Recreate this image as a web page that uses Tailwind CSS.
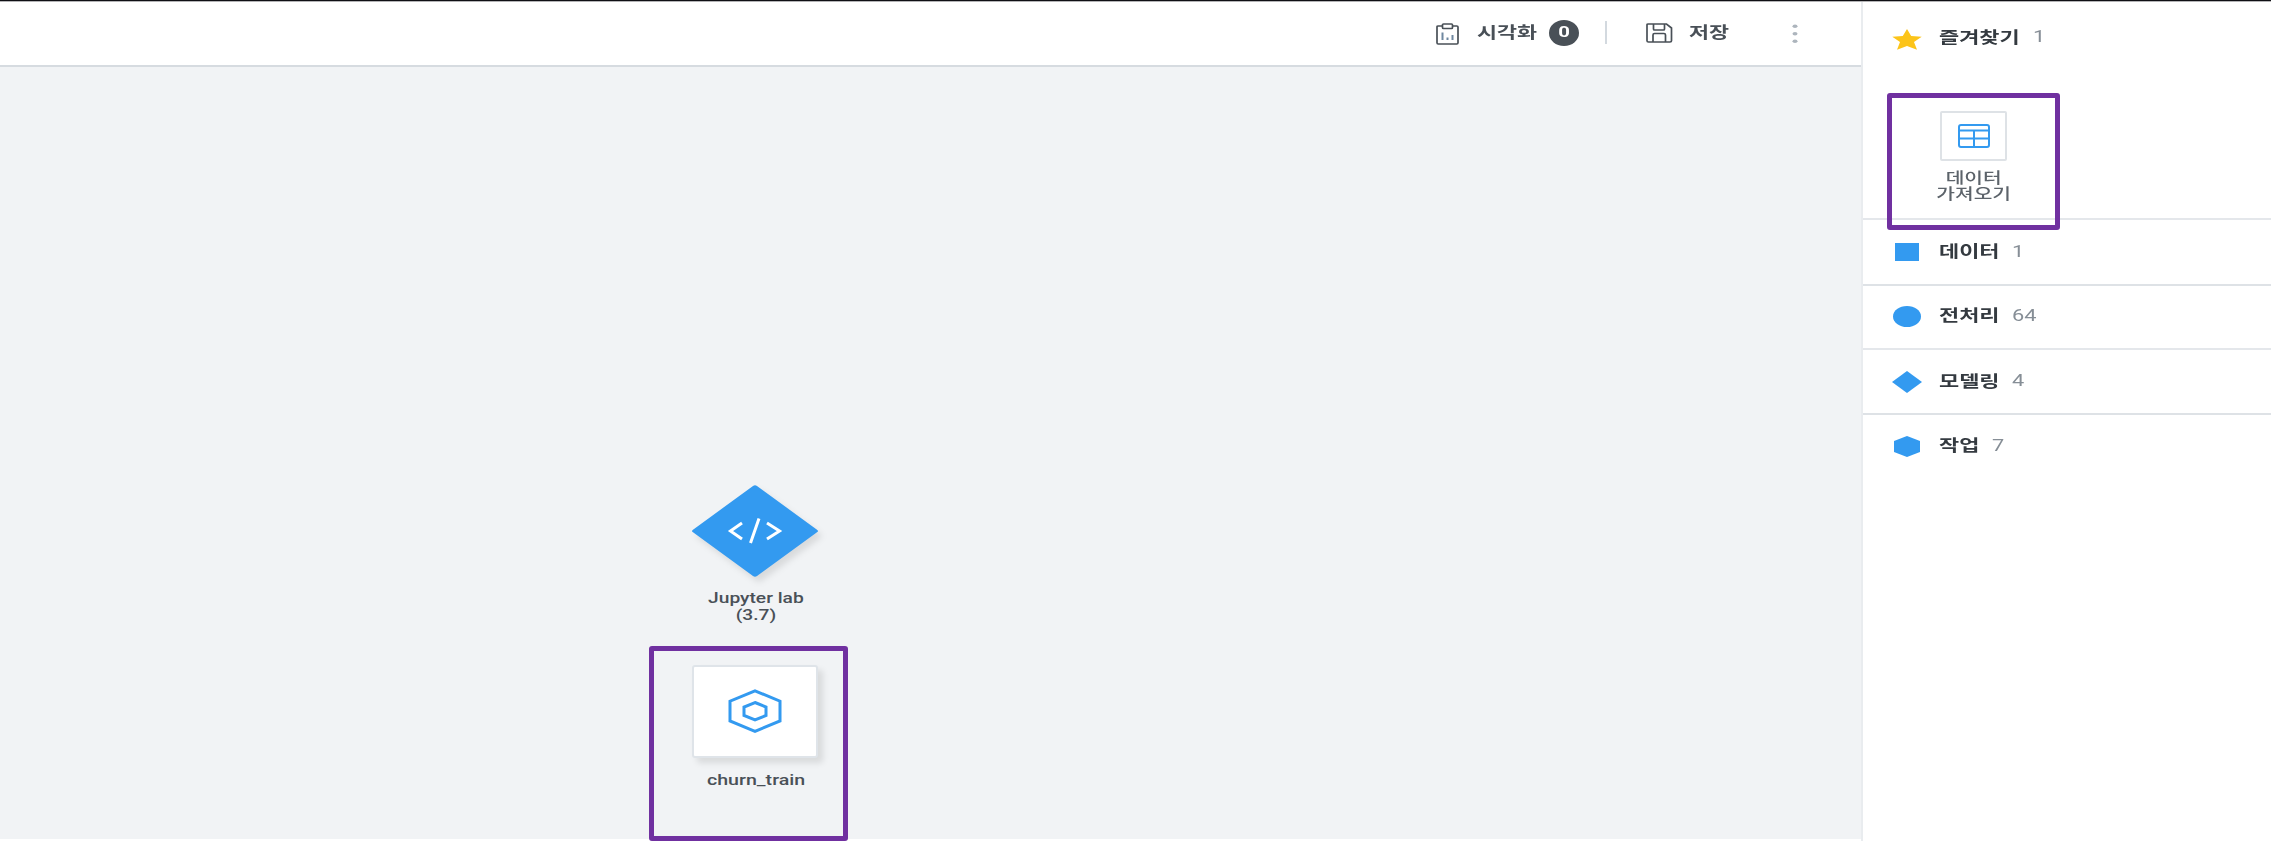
<!DOCTYPE html>
<html lang="ko">
<head>
<meta charset="utf-8">
<title>Workflow editor</title>
<script src="https://cdn.jsdelivr.net/npm/@tailwindcss/browser@4"></script>
</head>
<body class="w-[2271px] h-[841px] overflow-hidden bg-white font-['Roboto','Noto_Sans_CJK_KR',sans-serif] text-[#343a40]">
<div class="flex h-[841px] flex-col border-t border-[#101014]">
  <div class="h-px shrink-0 bg-[#b4b4b6]"></div>
  <div class="flex h-[839px]">
    <main class="flex w-[1861px] shrink-0 flex-col">
      <header class="flex h-[65px] shrink-0 items-center border-b-2 border-[#d6dbe0] pl-[1436px] pb-[2px] text-[#495057]">
        <svg class="mt-[2px] h-[22px] w-[23px] shrink-0" viewBox="0 0 23 22" fill="none" stroke="#495057" stroke-width="1.700"><path d="M6.500 3H2.200Q1 3 1 4V19.700Q1 21 2.200 21H20.800Q22 21 22 19.700V4Q22 3 20.800 3H16.500"/><rect x="6.500" y="1" width="10" height="4.500" rx="1"/><path d="M6.500 9.500V17M11.500 14.500V17M16.500 12V17" stroke="#6f87a0" stroke-width="2"/></svg>
        <div class="ml-[18px] w-[60px] shrink-0"><span class="inline-block origin-left scale-x-[1.36] text-[16px] leading-6 font-bold whitespace-nowrap">시각화</span></div>
        <div class="ml-3 flex h-[26px] w-[30px] shrink-0 items-center justify-center rounded-[50%/50%] bg-[#495057] text-white"><span class="-mt-[2px] inline-block scale-x-[1.45] text-[14px] leading-5 font-bold">0</span></div>
        <div class="ml-[26px] h-[23px] w-[2px] shrink-0 bg-[#d3d9df]"></div>
        <svg class="mt-[1px] ml-[39px] h-5 w-[27px] shrink-0" viewBox="0 0 27 20" fill="none" stroke="#495057" stroke-width="1.700"><path d="M2.200 1H20.500L25.500 5V17.800Q25.500 19 24 19H2.500Q1 19 1 17.800V2Q1 1 2.200 1ZM7.500 1V6Q7.500 7 8.500 7H17.500Q18.500 7 18.500 6V1M7 19V12Q7 10.500 8.500 10.500H18Q19.500 10.500 19.500 12V19"/></svg>
        <div class="ml-4 w-[40px] shrink-0"><span class="inline-block origin-left scale-x-[1.36] text-[16px] leading-6 font-bold whitespace-nowrap">저장</span></div>
        <svg class="mt-[2px] ml-[63px] h-[20px] w-[6px] shrink-0" viewBox="0 0 6 20" fill="#adb5bd"><ellipse cx="3" cy="2.200" rx="2.500" ry="1.800"/><ellipse cx="3" cy="9.800" rx="2.500" ry="1.800"/><ellipse cx="3" cy="17.300" rx="2.500" ry="1.800"/></svg>
      </header>
      <section class="relative h-[772px] shrink-0 bg-[#f1f3f5]">
        <div class="absolute left-[675px] top-[412px] flex w-[160px] flex-col items-center">
          <svg class="h-[104px] w-[144px] overflow-visible drop-shadow-[4px_5px_3px_rgba(0,0,0,0.1)]" viewBox="-9 -6 144 104"><path d="M61 1Q63 -.500 65 1L125 44.700Q127 46 125 47.300L65 91Q63 92.500 61 91L1 47.300Q-1 46 1 44.700Z" fill="#339af0"/><path d="M50 38L38.500 46L50 54M75 38L87.500 46L75 54M67 33.500L58.500 58" fill="none" stroke="#fff" stroke-width="3"/></svg>
          <span class="mt-[7px] inline-block translate-x-px scale-x-[1.37] text-[14px] leading-[17px] font-medium whitespace-nowrap text-center text-[#495057]">Jupyter lab<br>(3.7)</span>
        </div>
        <div class="absolute left-[675px] top-[598px] flex w-[160px] flex-col items-center">
          <div class="flex h-[93px] w-[126px] items-center justify-center rounded-[3px] border-2 border-[#dfe4e9] bg-white pb-px shadow-[5px_5px_6px_rgba(0,0,0,0.1)]">
            <svg class="h-[44px] w-[54px]" viewBox="0 0 54 44" fill="none" stroke="#339af0"><path d="M27 1.800L52 12.200V32L27 42.300L2 32V12.200Z" stroke-width="3"/><path d="M27 13.500L38 18V26.500L27 31L16 26.500V18Z" stroke-width="3"/></svg>
          </div>
          <span class="mt-[14px] inline-block translate-x-px scale-x-[1.4] text-[14px] leading-[17px] font-medium whitespace-nowrap text-[#495057]">churn_train</span>
        </div>
        <div class="absolute left-[649px] top-[579px] h-[195px] w-[199px] rounded-[3px] border-5 border-[#7030a0]"></div>
      </section>
    </main>
    <aside class="relative flex w-[410px] shrink-0 flex-col border-l-2 border-[#e9ecef] bg-white">
      <section class="h-[218px] shrink-0 border-b-2 border-[#e4e7eb]">
        <div class="flex h-[72px] items-center pl-[29px]">
          <svg class="mt-[2px] h-[21px] w-[30px]" viewBox="0 0 30 21"><path d="M15 0L19.200 7L29.700 7.800L22 13L25 20.700L15 16.900L5 20.700L8 13L.300 7.800L10.800 7Z" fill="#fcc419"/></svg>
          <div class="ml-[17px] w-[94px]"><span class="inline-block origin-left scale-x-[1.37] text-[16px] leading-6 font-bold whitespace-nowrap">즐겨찾기</span></div>
          <span class="-mt-[2px] inline-block origin-left scale-x-[1.36] text-[16px] leading-6 text-[#868e96]">1</span>
        </div>
        <div class="ml-[24px] mt-[37px] flex w-[173px] flex-col items-center">
          <div class="flex h-[50px] w-[67px] items-center justify-center rounded-[2px] border-2 border-[#dee2e6]">
            <svg class="h-6 w-8" viewBox="0 0 32 24" fill="none" stroke="#339af0" stroke-width="2"><rect x="1" y="1" width="30" height="22" rx="2"/><path d="M1 6.500H31M1 14.500H31M16 6.500V23"/></svg>
          </div>
          <span class="mt-[10px] inline-block scale-x-[1.4] text-[14.500px] leading-4 font-medium whitespace-nowrap text-center text-[#5c636a]">데이터<br>가져오기</span>
        </div>
      </section>
      <div class="flex h-[66px] shrink-0 items-center border-b-2 border-[#dee2e6] pl-[32px]">
        <svg class="h-[18px] w-6" viewBox="0 0 24 18"><path d="M0 0H24V18H0Z" fill="#339af0"/></svg>
        <div class="ml-5 w-[73px]"><span class="inline-block origin-left scale-x-[1.37] text-[16px] leading-6 font-bold whitespace-nowrap">데이터</span></div>
        <span class="-mt-[1px] inline-block origin-left scale-x-[1.36] text-[16px] leading-6 text-[#868e96]">1</span>
      </div>
      <div class="flex h-[64px] shrink-0 items-center border-b-2 border-[#e4e7eb] pb-[2px] pl-[30px]">
        <svg class="h-[21px] w-7" viewBox="0 0 28 21"><ellipse cx="14" cy="10.500" rx="14" ry="10.500" fill="#339af0"/></svg>
        <div class="ml-[18px] w-[73px]"><span class="inline-block origin-left scale-x-[1.37] text-[16px] leading-6 font-bold whitespace-nowrap">전처리</span></div>
        <span class="-mt-[1px] inline-block origin-left scale-x-[1.36] text-[16px] leading-6 text-[#868e96]">64</span>
      </div>
      <div class="flex h-[65px] shrink-0 items-center border-b-2 border-[#dee2e6] pl-[29px]">
        <svg class="h-[22px] w-[30px]" viewBox="0 0 30 22"><path d="M15 0L30 11L15 22L0 11Z" fill="#339af0"/></svg>
        <div class="ml-[17px] w-[73px]"><span class="inline-block origin-left scale-x-[1.37] text-[16px] leading-6 font-bold whitespace-nowrap">모델링</span></div>
        <span class="-mt-[1px] inline-block origin-left scale-x-[1.36] text-[16px] leading-6 text-[#868e96]">4</span>
      </div>
      <div class="flex h-[62px] shrink-0 items-center pl-[31px]">
        <svg class="h-[21px] w-[26px]" viewBox="0 0 26 21"><path d="M13 0L26 5V16L13 21L0 16V5Z" fill="#339af0"/></svg>
        <div class="ml-[19px] w-[53px]"><span class="inline-block origin-left scale-x-[1.37] text-[16px] leading-6 font-bold whitespace-nowrap">작업</span></div>
        <span class="-mt-[1px] inline-block origin-left scale-x-[1.36] text-[16px] leading-6 text-[#868e96]">7</span>
      </div>
      <div class="absolute left-[24px] top-[91px] h-[137px] w-[173px] rounded-[3px] border-5 border-[#7030a0]"></div>
    </aside>
  </div>
</div>
</body>
</html>
